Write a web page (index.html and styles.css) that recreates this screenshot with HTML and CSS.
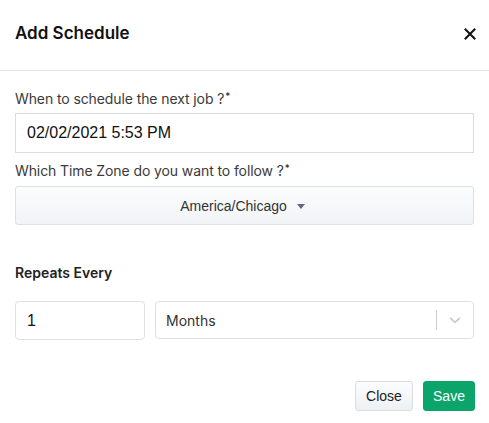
FILE: index.html
```html
<!DOCTYPE html>
<html>
<head>
<meta charset="utf-8">
<link rel="stylesheet" href="styles.css">
</head>
<body>
<div class="modal">
  <div class="modal-header">
    <h1 class="title">Add Schedule</h1>
    <span class="close-x">
      <svg width="12" height="12" viewBox="0 0 12 12"><path d="M1.5 1.5 L10.5 10.5 M10.5 1.5 L1.5 10.5" stroke="#111" stroke-width="2" stroke-linecap="square"/></svg>
    </span>
  </div>
  <div class="modal-body">
    <label class="label">When to schedule the next job ?<sup class="req">*</sup></label>
    <div class="input date-input">02/02/2021 5:53 PM</div>
    <label class="label label-2">Which Time Zone do you want to follow ?<sup class="req">*</sup></label>
    <div class="tz-button">
      <span>America/Chicago</span>
      <span class="caret"></span>
    </div>
    <div class="section-label">Repeats Every</div>
    <div class="repeat-row">
      <div class="input num-input">1</div>
      <div class="select">
        <span class="select-value">Months</span>
        <span class="select-sep"></span>
        <span class="select-chevron">
          <svg width="16" height="16" viewBox="0 0 20 20"><path d="M4 7.5 L10 13 L16 7.5" fill="none" stroke="#cccccc" stroke-width="2.2"/></svg>
        </span>
      </div>
    </div>
    <div class="footer">
      <button class="btn btn-close">Close</button>
      <button class="btn btn-save">Save</button>
    </div>
  </div>
</div>
</body>
</html>
```

FILE: styles.css
```css
html, body {
  margin: 0;
  padding: 0;
  background: #ffffff;
}
.modal {
  width: 489px;
  height: 423px;
  font-family: Inter, "Liberation Sans", sans-serif;
  color: #333;
}
.modal-header {
  height: 71px;
  box-sizing: border-box;
  border-bottom: 1px solid #e3e3e3;
  display: flex;
  align-items: center;
  justify-content: space-between;
  padding: 0 13px 5px 15px;
}
.title {
  margin: 0;
  font-size: 17px;
  font-weight: 600;
  color: #111;
}
.close-x {
  display: flex;
  align-items: center;
  margin-top: 2px;
}
.modal-body {
  padding: 18px 15px 0 15px;
  display: flex;
  flex-direction: column;
}
.label {
  font-size: 14px;
  letter-spacing: -0.1px;
  line-height: 20px;
  color: #3a3a3a;
  margin-bottom: 4px;
}
.label-2 {
  margin-top: 8px;
  margin-bottom: 5px;
}
.req {
  font-size: 10px;
  vertical-align: top;
  position: relative;
  top: -3px;
  margin-left: 1px;
  color: #222;
}
.input {
  box-sizing: border-box;
  border: 1px solid #dcdcdc;
  font-family: "Liberation Sans", Arial, sans-serif;
  font-size: 16px;
  color: #111;
  display: flex;
  align-items: center;
  padding-left: 11px;
}
.date-input {
  height: 40px;
  width: 459px;
}
.tz-button {
  box-sizing: border-box;
  height: 39px;
  width: 459px;
  border: 1px solid #dde0e4;
  border-radius: 3px;
  background: linear-gradient(#fbfcfd, #f1f4f7);
  display: flex;
  align-items: center;
  justify-content: center;
  gap: 10px;
  font-family: "Liberation Sans", Arial, sans-serif;
  font-size: 14px;
  color: #333;
  padding-right: 4px;
}
.caret {
  width: 0;
  height: 0;
  border-left: 4px solid transparent;
  border-right: 4px solid transparent;
  border-top: 5px solid #5f6b78;
  margin-top: 1px;
}
.section-label {
  margin-top: 38px;
  font-size: 14px;
  font-weight: 600;
  line-height: 20px;
  color: #222;
}
.repeat-row {
  margin-top: 18px;
  display: flex;
  gap: 10px;
}
.num-input {
  width: 130px;
  height: 39px;
  border-radius: 4px;
  border-color: #e0e0e0;
}
.select {
  box-sizing: border-box;
  width: 319px;
  height: 38px;
  border: 1px solid #e0e0e0;
  border-radius: 4px;
  display: flex;
  align-items: center;
  padding-left: 10px;
}
.select-value {
  flex: 1;
  font-size: 14px;
  color: #333;
}
.select-sep {
  width: 1px;
  height: 20px;
  background: #cccccc;
}
.select-chevron {
  width: 36px;
  display: flex;
  align-items: center;
  justify-content: center;
}
.footer {
  margin-top: 41px;
  display: flex;
  justify-content: flex-end;
  gap: 10px;
  margin-right: -1px;
}
.btn {
  height: 30px;
  box-sizing: border-box;
  font-family: "Liberation Sans", Arial, sans-serif;
  font-size: 14px;
  border-radius: 3px;
  padding: 0 8px;
  cursor: pointer;
}
.btn-close {
  width: 58px;
  border: 1px solid #d9dde2;
  background: linear-gradient(#fbfcfd, #eef1f4);
  color: #222;
}
.btn-save {
  width: 52px;
  border: 1px solid #0ba56b;
  background: #0ba56b;
  color: #fff;
}
```
